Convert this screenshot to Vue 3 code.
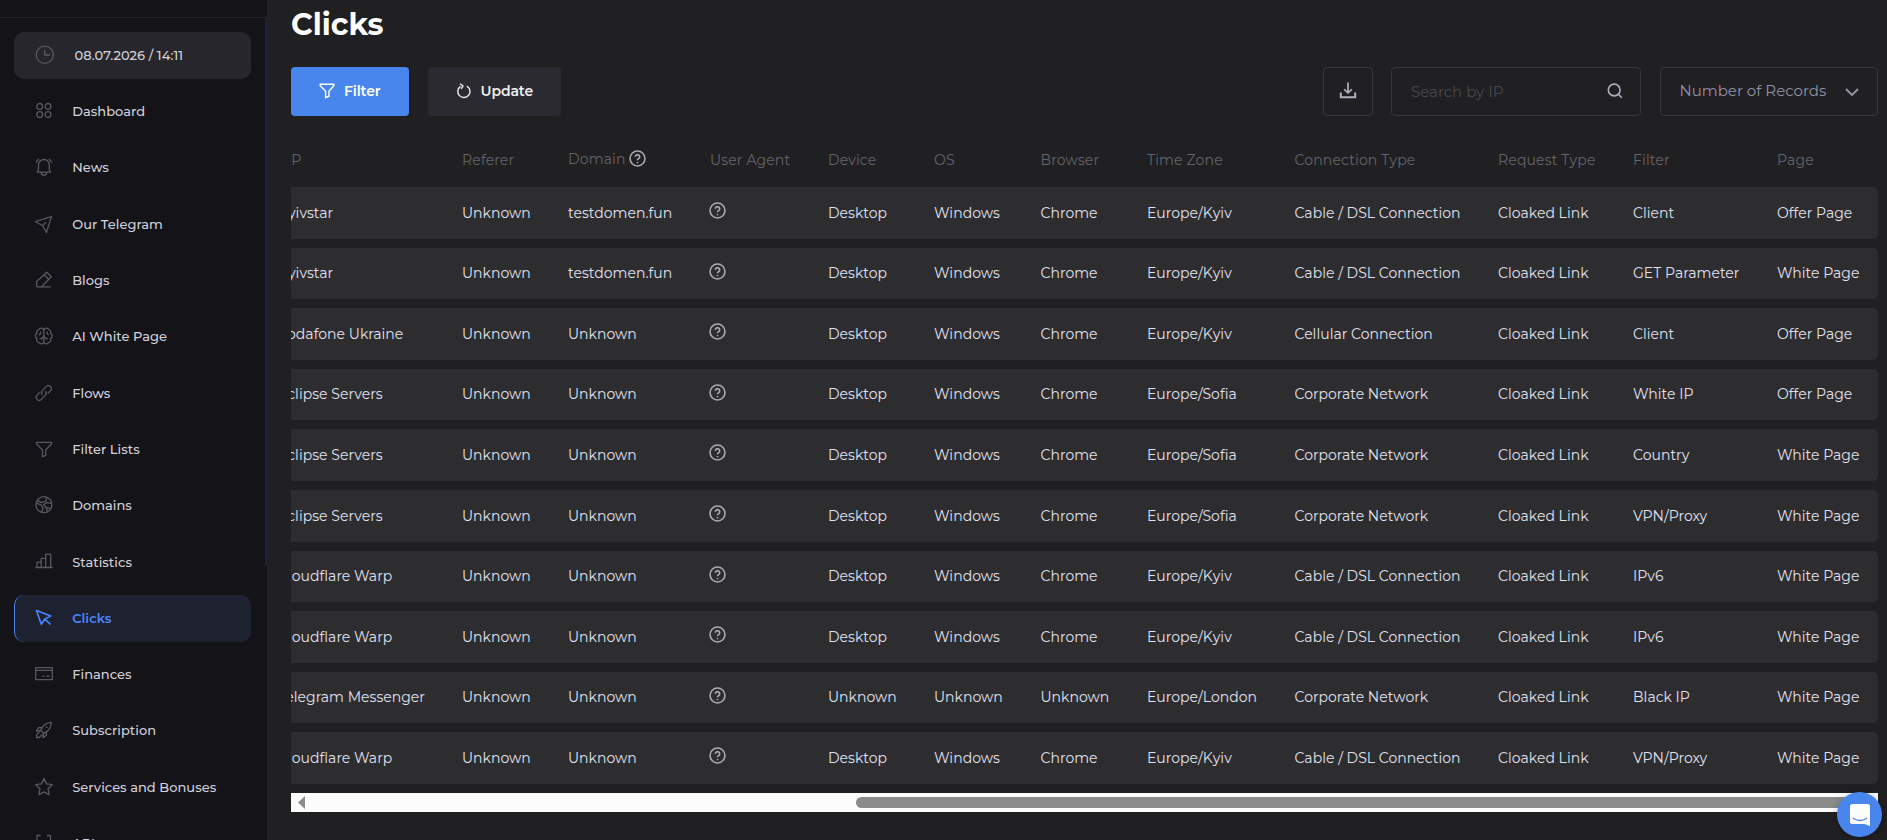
<template>
  <div class="layout">
    <aside class="sidebar">
      <div class="sidebar-top"></div>
      <nav class="menu">
        <div class="menu-item time">
          <svg class="icon" viewBox="0 0 20 20">
            <circle cx="10.8" cy="9.8" r="8.6" />
            <path d="M10.7 5v5h5.2" />
          </svg>
          <span>08.07.2026 / 14:11</span>
        </div>
        <div
          v-for="item in menu"
          :key="item.title"
          :class="['menu-item', { active: item.title === current }]"
          @click="current = item.title"
        >
          <svg class="icon" viewBox="0 0 20 20">
            <path :d="item.icon" />
          </svg>
          <span>{{ item.title }}</span>
        </div>
      </nav>
      <div class="sidebar-thumb"></div>
    </aside>

    <main class="content">
      <h1>Clicks</h1>

      <div class="toolbar">
        <button class="btn primary">
          <svg class="btn-icon" viewBox="0 0 16 16">
            <path d="M1.2 1.3h13.6v1.4L10 8.3v4.9l-3.4 1.5V8.3L1.2 2.7z" />
          </svg>
          Filter
        </button>
        <button class="btn update">
          <svg class="btn-icon" viewBox="0 0 16 16">
            <path d="M10.8 3.1a6.1 6.1 0 1 1-6.3.3M4 .8l3 2.1-1.8 3" />
          </svg>
          Update
        </button>

        <div class="tools">
          <button class="download">
            <svg viewBox="0 0 20 20">
              <path d="M10 1.5v10.2M6.2 8.3l3.8 3.6 3.8-3.6" />
              <path class="bold" d="M2.8 11.5v4.8h14.4v-4.8" />
            </svg>
          </button>
          <div class="search">
            <input v-model="search" type="text" placeholder="Search by IP" />
            <svg viewBox="0 0 16 16">
              <circle cx="7.2" cy="7" r="5.9" />
              <path d="M11.4 11.3l3.4 3.5" />
            </svg>
          </div>
          <div class="select">
            <span>Number of Records</span>
            <svg viewBox="0 0 14 8"><path d="M1 1l6 6 6-6" /></svg>
          </div>
        </div>
      </div>

      <div class="table-wrap">
        <div class="table">
          <div class="row head">
            <div v-for="col in columns" :key="col" class="cell" :class="{ domain: col === 'Domain' }">
              {{ col }}
              <svg v-if="col === 'Domain'" class="help" viewBox="0 0 18 18">
                <circle cx="9" cy="9" r="7.9" />
                <path d="M6.7 7.2a2.3 2.3 0 1 1 3.5 2c-.8.5-1.2.8-1.2 1.7M9 12.6v1.3" />
              </svg>
            </div>
          </div>
          <div v-for="(row, index) in rows" :key="index" class="row">
            <div class="cell">{{ row.isp }}</div>
            <div class="cell">Unknown</div>
            <div class="cell">{{ row.domain }}</div>
            <div class="cell">
              <svg class="help" viewBox="0 0 18 18">
                <circle cx="9" cy="9" r="7.9" />
                <path d="M6.7 7.2a2.3 2.3 0 1 1 3.5 2c-.8.5-1.2.8-1.2 1.7M9 12.6v1.3" />
              </svg>
            </div>
            <div class="cell">{{ row.device }}</div>
            <div class="cell">{{ row.os }}</div>
            <div class="cell">{{ row.browser }}</div>
            <div class="cell">{{ row.zone }}</div>
            <div class="cell">{{ row.connection }}</div>
            <div class="cell">Cloaked Link</div>
            <div class="cell">{{ row.filter }}</div>
            <div class="cell">{{ row.page }}</div>
          </div>
        </div>
      </div>

      <div class="scrollbar">
        <svg class="arrow" viewBox="0 0 7 13"><path d="M7 0v13L0 6.5z" /></svg>
        <div class="thumb"></div>
      </div>
    </main>

    <button class="chat">
      <svg viewBox="0 0 20 22">
        <path class="bubble" d="M2.6 0h14.8Q20 0 20 2.6V22l-5.6-2H2.6Q0 20 0 17.4V2.6Q0 0 2.6 0z" />
        <path class="smile" d="M3.2 14.2q6.8 4.6 13.6 0" />
      </svg>
    </button>
  </div>
</template>

<script setup>
import { ref } from 'vue';

const current = ref('Clicks');
const search = ref('');

const menu = [
  {
    title: 'Dashboard',
    icon: 'M8.6 5.4a2.9 2.9 0 1 1-5.8 0a2.9 2.9 0 1 1 5.8 0zM16.9 5.4a2.9 2.9 0 1 1-5.8 0a2.9 2.9 0 1 1 5.8 0zM8.6 13.6a2.9 2.9 0 1 1-5.8 0a2.9 2.9 0 1 1 5.8 0zM16.9 13.6a2.9 2.9 0 1 1-5.8 0a2.9 2.9 0 1 1 5.8 0z'
  },
  {
    title: 'News',
    icon: 'M2.6 15.2h14.6M3.5 15l1-2.8V7.9a5.4 5.4 0 0 1 10.8 0v4.3l1 2.8M7.2 15.4a2.7 2.7 0 0 0 5.4 0M2.3 5.6q.5-2.2 2.7-3.5M17.5 5.6q-.5-2.2-2.7-3.5'
  },
  { title: 'Our Telegram', icon: 'M1.3 7.5L17.5 2.6l-5.1 15.9-3.7-6.8zM8.7 11.6l3.2-3.4' },
  { title: 'Blogs', icon: 'M2.6 16.9H17M2.6 16.7v-5.1l10.2-9.3 4.5 4.5-9.8 10M10.2 4.8l4.4 4.4' },
  {
    title: 'AI White Page',
    icon: 'M9.8 4.2a2.7 2.7 0 0 0-5-.7A3 3 0 0 0 3 7.2a3.1 3.1 0 0 0 0 5.4 3 3 0 0 0 2.3 4.2 2.6 2.6 0 0 0 4.5-.7zM9.8 4.2a2.7 2.7 0 0 1 5-.7 3 3 0 0 1 1.8 3.7 3.1 3.1 0 0 1 0 5.4 3 3 0 0 1-2.3 4.2 2.6 2.6 0 0 1-4.5-.7M6.5 5.5v2.2L4.8 9M13.2 5.5v2.2L14.9 9M5.5 12.6h2.1l2.2-2 2.2 2h2.1'
  },
  {
    title: 'Flows',
    icon: 'M8.4 11.6a3 3 0 0 1 0-4.2l3.9-4a3 3 0 0 1 4.2 4.3l-2.7 2.7M11.2 8.2a3 3 0 0 1 0 4.2l-3.9 4a3 3 0 0 1-4.2-4.3l2.7-2.7'
  },
  { title: 'Filter Lists', icon: 'M2.5 3.3h15v1.5L11.8 11v5.3l-3.3 1.4V11l-6-6.2z' },
  {
    title: 'Domains',
    icon: 'M17.9 9.7a8 8 0 1 1-16 0a8 8 0 1 1 16 0zM3.3 5.4l3.9 2.2 4.2-1.2 1.5-3.9M2.3 7.8l5 2.3 1.8 3-1.4 4.2M17.5 8.4l-4.7-.8-3.2 2.1 2.4 2.8 4 .8M12 12.5l1.4 4.1'
  },
  { title: 'Statistics', icon: 'M1.5 15.5h17M3 15.5v-5.3h4.2M7.2 15.5V6.3h4.5M11.7 15.5V2.2h5v13.3' },
  { title: 'Clicks', icon: 'M2.5 2.6l14.3 5.5-6.1 2.9-3.4 5.3zM10.7 11l5.9 5.3' },
  { title: 'Finances', icon: 'M1.7 3.6h16.6v12.1H1.7zM1.7 6.4h16.6M8.5 12.2h2.2M12.3 12.2h3.2' },
  {
    title: 'Subscription',
    icon: 'M6.7 10.3C8.6 5.6 12 2.6 17.2 2.4c.1 5-2.7 8.7-7.5 10.9zM8 7.7H4.7L2.4 11l4.3-.7M12.4 12v3.3L9 17.6l.7-4.3M5.6 11.5l-3 3.4v2.6h2.6l3.2-3M11.9 6.4l1.5 1.5'
  },
  {
    title: 'Services and Bonuses',
    icon: 'M10 1.6l2.5 5.3 5.8.8-4.2 4.1 1 5.9L10 14.9l-5.1 2.8 1-5.9L1.7 7.7l5.8-.8z'
  },
  { title: 'API', icon: 'M6.5 2.5H3v15h3.5M13 2.5h3.5v15H13' }
];

const columns = [
  'ISP', 'Referer', 'Domain', 'User Agent', 'Device', 'OS',
  'Browser', 'Time Zone', 'Connection Type', 'Request Type', 'Filter', 'Page'
];

const cable = 'Cable / DSL Connection';
const corporate = 'Corporate Network';

// по умолчанию Desktop / Windows / Chrome
function click(isp, domain, zone, connection, filter, page, client = ['Desktop', 'Windows', 'Chrome']) {
  const [device, os, browser] = client;
  return { isp, domain, zone, connection, filter, page, device, os, browser };
}

const rows = ref([
  click('Kyivstar', 'testdomen.fun', 'Europe/Kyiv', cable, 'Client', 'Offer Page'),
  click('Kyivstar', 'testdomen.fun', 'Europe/Kyiv', cable, 'GET Parameter', 'White Page'),
  click('Vodafone Ukraine', 'Unknown', 'Europe/Kyiv', 'Cellular Connection', 'Client', 'Offer Page'),
  click('Eclipse Servers', 'Unknown', 'Europe/Sofia', corporate, 'White IP', 'Offer Page'),
  click('Eclipse Servers', 'Unknown', 'Europe/Sofia', corporate, 'Country', 'White Page'),
  click('Eclipse Servers', 'Unknown', 'Europe/Sofia', corporate, 'VPN/Proxy', 'White Page'),
  click('Cloudflare Warp', 'Unknown', 'Europe/Kyiv', cable, 'IPv6', 'White Page'),
  click('Cloudflare Warp', 'Unknown', 'Europe/Kyiv', cable, 'IPv6', 'White Page'),
  click('Telegram Messenger', 'Unknown', 'Europe/London', corporate, 'Black IP', 'White Page', ['Unknown', 'Unknown', 'Unknown']),
  click('Cloudflare Warp', 'Unknown', 'Europe/Kyiv', cable, 'VPN/Proxy', 'White Page')
]);
</script>

<style>
body {
  background: #202022;
}
</style>

<style scoped>
.layout {
  display: flex;
  height: 100vh;
  overflow: hidden;
  background: #202022;
  color: #e2e1f0;
  font-family: Montserrat, Inter, sans-serif;
}

svg {
  display: block;
  flex: none;
  fill: none;
  stroke: currentColor;
}

button,
input {
  font-family: inherit;
}

/* sidebar */
.sidebar {
  position: relative;
  flex: none;
  width: 267px;
  background: #141318;
  overflow: hidden;
}

.sidebar-top {
  height: 17px;
  border-bottom: 1px solid #232328;
}

.sidebar-thumb {
  position: absolute;
  top: 18px;
  right: 0;
  width: 2px;
  height: 548px;
  background: #1b2440;
}

.menu {
  display: flex;
  flex-direction: column;
  gap: 9.5px;
  padding: 14px 16px 0 14px;
}

.menu-item {
  display: flex;
  flex: none;
  align-items: center;
  gap: 18.2px;
  box-sizing: border-box;
  height: 46.8px;
  padding: 0 0 1px 19px;
  border-left: 1px solid transparent;
  border-radius: 10px;
  color: #d2d1db;
  font-size: 13px;
  font-weight: 500;
  letter-spacing: 0.03px;
  cursor: pointer;
}

.menu-item.time {
  gap: 20.5px;
  padding-bottom: 0;
  background: #27262c;
}

.menu-item.active {
  border-left-color: #4886ff;
  background: #1e212f;
  color: #4886ff;
  font-weight: 600;
}

.icon {
  width: 20px;
  height: 20px;
  color: #595862;
  stroke-width: 1.3;
  stroke-linejoin: round;
}

.active .icon {
  color: #4886ff;
  stroke-width: 1.6;
}

/* content */
.content {
  flex: 1;
  min-width: 0;
  padding: 7px 9px 0 24px;
}

h1 {
  margin: 0;
  height: 60px;
  line-height: 36px;
  color: #fff;
  font-size: 30px;
  font-weight: 700;
}

.toolbar {
  display: flex;
  height: 49px;
}

.btn {
  display: flex;
  align-items: center;
  justify-content: center;
  gap: 8.5px;
  width: 118px;
  padding: 0 0 1px;
  border: 0;
  border-radius: 4px;
  color: #fff;
  font-size: 14px;
  font-weight: 600;
  letter-spacing: -0.1px;
}

.btn.primary {
  background: #4886ee;
}

.btn.update {
  width: 133px;
  margin-left: 19px;
  background: #2b2a30;
  color: #efeff2;
}

.btn-icon {
  width: 16px;
  height: 16px;
  stroke-width: 1.4;
}

.tools {
  display: flex;
  margin-left: auto;
}

.download,
.search,
.select {
  display: flex;
  align-items: center;
  box-sizing: border-box;
  border: 1px solid #37363f;
  border-radius: 4px;
  background: none;
  color: #b0afbf;
}

.download {
  justify-content: center;
  width: 50px;
  padding: 0 0 2px;
}

.download svg {
  width: 20px;
  height: 20px;
  stroke-width: 1.7;
}

.download .bold {
  stroke-width: 2;
}

.search {
  width: 250px;
  margin: 0 19px 0 18px;
  padding: 0 17px 0 19px;
}

.search input {
  flex: 1;
  min-width: 0;
  padding: 0;
  border: 0;
  outline: 0;
  background: none;
  color: #d9d8e4;
  font-size: 15px;
}

.search input::placeholder {
  color: #48474e;
}

.search svg {
  width: 16px;
  height: 16px;
  margin-bottom: 1px;
  stroke-width: 1.6;
}

.select {
  justify-content: space-between;
  width: 218px;
  padding: 0 18px 2px 18.5px;
  color: #9391a6;
  font-size: 15px;
}

.select svg {
  width: 14px;
  height: 8px;
  margin-top: 3px;
  stroke-width: 1.9;
}

/* table, scrolled to the right edge */
.table-wrap {
  overflow: hidden;
}

.table {
  display: flex;
  flex-direction: column;
  gap: 9px;
  margin-left: -13px;
}

.row {
  display: grid;
  grid-template-columns: 184px 106px 142px 118px 106px 106.5px 106.5px 147.5px 203.5px 135px 144px 1fr;
  align-items: center;
  box-sizing: border-box;
  height: 51.6px;
  padding-bottom: 0.4px;
  border-radius: 0 5px 5px 0;
  background: #2d2d2f;
  font-size: 14px;
  letter-spacing: 0.03px;
  white-space: nowrap;
}

.row.head {
  height: 62px;
  padding: 26px 0 0;
  background: none;
  color: #64636a;
  letter-spacing: 0.15px;
}

.head .domain {
  display: flex;
  align-items: center;
  gap: 4px;
  padding-bottom: 2px;
}

.help {
  width: 17px;
  height: 17px;
  margin: 0 0 4px -1px;
  color: #aaa9b4;
  stroke-width: 1.7;
}

.head .help {
  margin: 0 0 2px -0.5px;
}

.scrollbar {
  display: flex;
  align-items: center;
  box-sizing: border-box;
  height: 19px;
  margin-top: 9px;
  padding: 0 19px 0 7px;
  background: #fcfcfc;
}

.arrow {
  width: 7px;
  height: 13px;
  fill: #8b8b8b;
  stroke: none;
}

.thumb {
  flex: 1;
  height: 11px;
  margin-left: 551px;
  border-radius: 6px;
  background: #8b8b8b;
}

.chat {
  position: absolute;
  left: 1837px;
  top: 792px;
  display: flex;
  align-items: center;
  justify-content: center;
  width: 45px;
  height: 45px;
  padding: 0;
  border: 0;
  border-radius: 50%;
  background: #4886ee;
  box-shadow: 0 1px 8px rgba(0, 0, 0, 0.25);
}

.chat svg {
  width: 20px;
  height: 22px;
  margin-left: 1px;
}

.bubble {
  fill: #fff;
  stroke: none;
}

.smile {
  stroke: #4886ee;
  stroke-width: 1.3;
  stroke-linecap: round;
}
</style>
